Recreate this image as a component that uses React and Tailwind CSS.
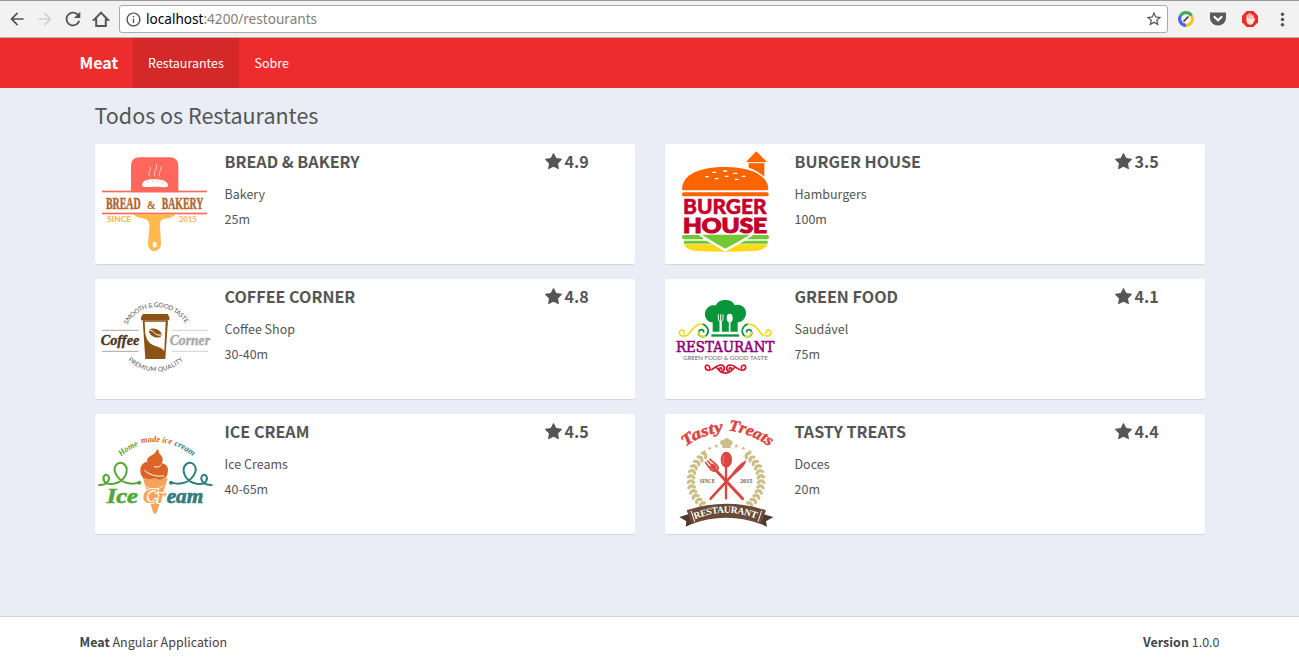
import React from "react";
import { MdArrowBack, MdArrowForward, MdRefresh, MdInfoOutline, MdStarBorder, MdMoreVert } from "react-icons/md";

const SERIF = "'Liberation Serif', serif";
const SANS = "'Lato', 'Liberation Sans', sans-serif";
const LOGO = "block h-[120px] w-[120px] shrink-0";

// k condenses (or widens) the letters; w is the drawn width.
function T({ x, y, w, k = 1, size, fill, font = SANS, weight = 700, style, children, ...rest }) {
  return (
    <text transform={`translate(${x} ${y}) scale(${k} 1)`} textLength={w / k} lengthAdjust="spacingAndGlyphs" fontSize={size} fill={fill} fontFamily={font} fontWeight={weight} fontStyle={style} {...rest}>
      {children}
    </text>
  );
}

function BreadLogo() {
  return (
    <svg viewBox="0 0 360 360" className={LOGO}>
      <path d="M108 145V66Q108 40 134 40H224Q250 40 250 66V145Z" fill="#ff665c" />
      <path d="M141 122C143 107 165 105 180 106C202 106 218 112 219 124C219 132 208 129 180 128C154 129 141 131 141 122Z" fill="#fff" />
      <path d="M155 111l5 7M170 108l5 7M185 108l5 7M200 111l4 7" stroke="#ff9b91" strokeWidth="2" />
      <path d="M165 97C154 87 173 78 164 69M181 97C170 84 192 73 182 60M195 97C186 87 203 78 198 67" fill="none" stroke="#ffc9c3" strokeWidth="3" />
      <rect x="21" y="140" width="315" height="5" fill="#ff665c" />
      <rect x="21" y="206" width="315" height="5" fill="#ff665c" />
      <T x="33" y="194" w="104" k={0.607} size="51" fill="#b1652f" font={SERIF} stroke="#b1652f" strokeWidth="1.5">BREAD</T>
      <T x="156" y="194" w="26" k={0.77} size="40" fill="#b1652f" font={SERIF}>&amp;</T>
      <T x="200" y="194" w="125" k={0.596} size="51" fill="#b1652f" font={SERIF} stroke="#b1652f" strokeWidth="1.5">BAKERY</T>
      <path d="M116 210H241C235 222 220 222 209 224C196 227 194 235 195 249L198 298C198 329 159 329 159 298L163 249C164 235 160 227 148 224C136 221 122 221 116 210Z" fill="#ffb94f" />
      <ellipse cx="179" cy="302" rx="6" ry="9" fill="#fff" />
      <T x="36" y="235" w="72" k={1.15} size="20" fill="#ffb94f" weight="900">SINCE</T>
      <T x="251" y="235" w="54" k={1.15} size="20" fill="#ffb94f" weight="900">2015</T>
    </svg>
  );
}

function BurgerLogo() {
  return (
    <svg viewBox="0 0 360 360" className={LOGO}>
      <path d="M243 54L274 22L306 54H298V99Q277 78 251 71V54Z" fill="#fb6500" />
      <path d="M251 56H298" stroke="#fff" strokeWidth="3" />
      <path d="M51 135C53 89 107 69 181 69C255 69 308 92 310 135Q310 139 304 139H57Q51 139 51 135Z" fill="#fb6500" />
      <g stroke="#fff" strokeWidth="4" strokeLinecap="round">
        <path d="M143 85h9M176 81h9M206 88h9M122 98h8M151 104h8M181 97h8M211 106h8M232 97h8" />
      </g>
      <rect x="51" y="145" width="260" height="12" rx="5" fill="#fb6500" />
      <T x="54" y="210" w="251" size="65" fill="#c60029" weight="900" stroke="#c60029" strokeWidth="1.5">BURGER</T>
      <T x="54" y="268" w="252" size="64" fill="#c60029" weight="900" stroke="#c60029" strokeWidth="3.5">HOUSE</T>
      <rect x="51" y="273" width="261" height="13" rx="6" fill="#72c832" />
      <path d="M57 290H308V299H57Z" fill="#72c832" />
      <path d="M57 301H308Q303 315 277 320Q181 326 86 320Q61 315 57 301Z" fill="#ffd817" />
      <path d="M104 272L181 320L262 272" fill="#72c832" stroke="#fff" strokeWidth="6" />
      <path d="M131 273H235L182 305Z" fill="#72c832" />
      <path d="M116 282L181 318L248 282" fill="none" stroke="#fff" strokeWidth="7" />
    </svg>
  );
}

function CoffeeLogo() {
  return (
    <svg viewBox="0 0 360 360" className={LOGO}>
      <defs>
        <path id="coffee-top" d="M97 137A99 99 0 0 1 272 137" />
        <path id="coffee-bottom" d="M99 243A118 118 0 0 0 268 240" />
      </defs>
      <text fontFamily={SANS} fontSize="19" fill="#555"><textPath href="#coffee-top" textLength="211">SMOOTH &amp; GOOD TASTE</textPath></text>
      <text fontFamily={SANS} fontSize="19" fill="#555"><textPath href="#coffee-bottom" textLength="184">PREMIUM QUALITY</textPath></text>
      <path d="M21 154H131M21 217H131" stroke="#8b7569" strokeWidth="2" />
      <path d="M230 154H340M230 217H340" stroke="#bbb" strokeWidth="2" />
      <T x="17" y="198" w="116" size="46" fill="#513228" font={SERIF} style="italic" stroke="#513228" strokeWidth="1.2">Coffee</T>
      <T x="224" y="198" w="121" size="46" fill="#aaa" font={SERIF} style="italic" stroke="#aaa" strokeWidth="1.2">Corner</T>
      <path d="M144 105H218L223 115V124H138V115Z" fill="#8d5314" />
      <path d="M143 124H219L211 240H151Z" fill="#8d5314" />
      <path d="M149 128H212L208 216C194 199 168 205 156 181L151 166Z" fill="#fff" />
      <ellipse cx="181" cy="162" rx="20" ry="12" transform="rotate(24 181 162)" fill="#8d5314" />
      <path d="M164 154C177 153 178 172 199 168" fill="none" stroke="#fff" strokeWidth="3" />
    </svg>
  );
}

function GreenLogo() {
  return (
    <svg viewBox="0 0 360 360" className={LOGO}>
      <path d="M143 158V130C116 128 111 91 137 80C145 78 150 80 153 79C160 58 202 58 209 79C226 72 244 85 243 103C242 120 230 130 218 130V158Z" fill="#07963a" />
      <path d="M139 166H222V173H139Z" fill="#07963a" />
      <path d="M160 106V119Q160 126 165 127V160M174 106V119Q174 126 169 127V160M167 106V160" fill="none" stroke="#fff" strokeWidth="3" />
      <ellipse cx="194" cy="117" rx="9" ry="13" fill="#fff" />
      <path d="M194 126V160" stroke="#fff" strokeWidth="5" />
      <g fill="none" strokeWidth="5" strokeLinecap="round">
        <path d="M57 164C62 152 43 149 43 161C44 174 65 176 77 158C91 137 109 130 121 140" stroke="#f1db20" />
        <path d="M115 136C130 143 134 160 124 169C113 178 99 171 101 160C103 149 116 150 116 159" stroke="#07963a" />
        <path d="M101 160C102 170 111 175 120 171" stroke="#f1db20" />
        <path d="M304 164C299 152 318 149 318 161C317 174 296 176 284 158C270 137 252 130 240 140" stroke="#f1db20" />
        <path d="M246 136C231 143 227 160 237 169C248 178 262 171 260 160C258 149 245 150 245 159" stroke="#07963a" />
        <path d="M260 160C259 170 250 175 241 171" stroke="#f1db20" />
      </g>
      <T x="33" y="219" w="295" size="42" fill="#900075" font="'DejaVu Serif', serif" weight="400" stroke="#900075" strokeWidth="1.6">RESTAURANT</T>
      <T x="54" y="244" w="254" size="16" fill="#666" weight="400">GREEN FOOD &amp; GOOD TASTE</T>
      <g fill="none" stroke="#d31631" strokeWidth="5" strokeLinecap="round">
        <path d="M134 268C136 257 120 255 121 265C122 276 137 277 149 266C164 253 179 258 178 269C177 280 162 281 163 271C164 263 172 267 170 271M153 264C164 277 170 283 181 282" />
        <path d="M229 268C227 257 243 255 242 265C241 276 226 277 214 266C199 253 184 258 185 269C186 280 201 281 200 271C199 263 191 267 193 271M210 264C199 277 192 283 181 282" />
      </g>
    </svg>
  );
}

function IceLogo() {
  return (
    <svg viewBox="0 0 360 360" className={LOGO}>
      <defs>
        <path id="ice-home" d="M78 128Q102 104 140 91" />
        <path id="ice-made" d="M139 88Q185 78 234 92" />
        <path id="ice-cream" d="M237 94Q268 105 300 132" />
      </defs>
      <g fontFamily={SERIF} fontWeight="700" fontStyle="italic" fontSize="26">
        <text fill="#54a737"><textPath href="#ice-home" textLength="62" lengthAdjust="spacingAndGlyphs">Home</textPath></text>
        <text fill="#db6626"><textPath href="#ice-made" textLength="92" lengthAdjust="spacingAndGlyphs">made ice</textPath></text>
        <text fill="#2f7f7e"><textPath href="#ice-cream" textLength="65" lengthAdjust="spacingAndGlyphs">cream</textPath></text>
      </g>
      <path d="M144 193H218L186 294Q180 304 174 294Z" fill="#f5a45d" />
      <path d="M145 193C128 172 136 145 157 143C153 124 180 128 186 106C195 107 188 117 197 123C207 132 203 145 199 148C216 149 222 164 218 176Q217 190 207 193L194 197L180 193L166 196Z" fill="#dd6427" />
      <path d="M149 170Q173 191 207 186M178 158Q191 163 198 153" fill="none" stroke="#fff" strokeWidth="3" strokeLinecap="round" />
      <path d="M151 217L203 244M157 242L206 215M166 267L194 251" stroke="#ffd2a7" strokeWidth="4" />
      <g fill="none" strokeWidth="6" strokeLinecap="round">
        <path d="M12 213C34 214 47 198 40 186C32 175 20 188 28 202C36 215 75 214 91 185C104 157 82 137 65 151C48 168 69 202 101 208Q116 211 130 206" stroke="#54a737" />
        <path d="M350 213C327 214 314 198 321 186C329 175 341 188 333 202C325 215 286 214 270 185C257 157 279 137 296 151C313 168 292 202 260 208Q245 211 231 206" stroke="#2f7f7e" />
      </g>
      <circle cx="133" cy="206" r="6" fill="#54a737" /><circle cx="228" cy="206" r="6" fill="#2f7f7e" />
      <T x="35" y="267" w="94" k={1.12} size="66" fill="#54a737" font={SERIF} style="italic" stroke="#54a737" strokeWidth="2">Ice</T>
      <T x="143" y="267" w="71" k={0.92} size="66" fill="#f5a45d" font={SERIF} style="italic" stroke="#fff" strokeWidth="6" paintOrder="stroke">Cr</T>
      <T x="215" y="267" w="110" size="62" fill="#2f7f7e" font={SERIF} style="italic" stroke="#2f7f7e" strokeWidth="2">eam</T>
    </svg>
  );
}

function laurel(side) {
  const leaves = [];
  for (let i = 0; i < 12; i++) {
    const a = ((125 + i * 9) * Math.PI) / 180;
    const x = 183 + side * Math.cos(a) * 105;
    const y = 200 - Math.sin(a) * 97;
    const turn = side * (125 + i * 9);
    leaves.push(
      <g key={i} transform={`translate(${x} ${y}) rotate(${-turn})`}>
        <ellipse cx="7" cy="0" rx="9" ry="5" transform="rotate(-40)" />
        <ellipse cx="-7" cy="0" rx="9" ry="5" transform="rotate(40)" />
      </g>
    );
  }
  return leaves;
}

const STAR = "M0 -7L2 -2L7 -2L3 1L5 6L0 3L-5 6L-3 1L-7 -2L-2 -2Z";

function TastyLogo() {
  return (
    <svg viewBox="0 0 360 360" className={LOGO}>
      <defs>
        <path id="tasty-one" d="M62 99Q109 60 184 52" />
        <path id="tasty-two" d="M190 49Q256 56 320 102" />
        <path id="tasty-band" d="M90 316Q182 277 278 316" />
      </defs>
      <g fontFamily={SERIF} fontStyle="italic" fontWeight="700" fontSize="48" fill="#dc4641" stroke="#dc4641" strokeWidth="1.5">
        <text><textPath href="#tasty-one" textLength="124" lengthAdjust="spacingAndGlyphs">Tasty</textPath></text>
        <text><textPath href="#tasty-two" textLength="134" lengthAdjust="spacingAndGlyphs">Treats</textPath></text>
      </g>
      <g fill="#cdbd87">
        {laurel(1)}{laurel(-1)}
        <path d="M172 94C160 90 166 75 176 78C180 70 192 72 194 78C204 76 207 91 197 94V102H172Z" />
        {[[118, 113], [134, 103], [154, 96], [214, 96], [235, 103], [255, 113]].map(([x, y]) => <path key={x} d={STAR} transform={`translate(${x} ${y})`} />)}
      </g>
      <g stroke="#dc4641" fill="none" strokeLinecap="round">
        <path d="M150 166L233 254" strokeWidth="9" />
        <path d="M122 146L137 166Q147 175 157 168Q163 160 153 151L135 136M128 141L146 160" strokeWidth="5" />
        <path d="M135 159L148 168L154 160L146 150Z" fill="#dc4641" strokeWidth="3" />
        <path d="M137 254L214 170" strokeWidth="8" />
        <path d="M183 156V253" strokeWidth="7" />
      </g>
      <path d="M202 178C215 156 232 145 244 138C240 157 224 170 207 183Z" fill="#dc4641" />
      <ellipse cx="184" cy="137" rx="17" ry="24" fill="#dc4641" />
      <path d="M177 150Q171 133 178 124" stroke="#ef9995" strokeWidth="2" fill="none" />
      <T x="104" y="207" w="46" size="16" fill="#756052" font={SERIF}>SINCE</T>
      <T x="225" y="207" w="37" size="16" fill="#756052" font={SERIF}>2015</T>
      <path d="M43 309L79 298L88 326L62 338L64 322ZM325 309L288 298L279 326L306 338L303 322Z" fill="#51382d" />
      <path d="M65 289Q183 250 303 289L287 330Q183 293 80 330Z" fill="#6a4b39" />
      <path d="M78 290L89 323M290 290L279 323" stroke="#fff" strokeWidth="3" />
      <text fontFamily={SERIF} fontWeight="700" fontSize="29" fill="#fff"><textPath href="#tasty-band" textLength="188">RESTAURANT</textPath></text>
    </svg>
  );
}

const RESTAURANTS = [
  ["BREAD & BAKERY", "Bakery", "25m", "4.9", BreadLogo],
  ["BURGER HOUSE", "Hamburgers", "100m", "3.5", BurgerLogo],
  ["COFFEE CORNER", "Coffee Shop", "30-40m", "4.8", CoffeeLogo],
  ["GREEN FOOD", "Saudável", "75m", "4.1", GreenLogo],
  ["ICE CREAM", "Ice Creams", "40-65m", "4.5", IceLogo],
  ["TASTY TREATS", "Doces", "20m", "4.4", TastyLogo],
];

function BrowserBar() {
  return (
    <div className="flex h-[38px] shrink-0 items-center border-t border-b border-t-[#999] border-b-[#b5b3b3] bg-[#f2f2f2] text-[#555]">
      <div className="flex w-[119px] shrink-0 items-center pl-[7px]">
        <MdArrowBack size={20} />
        <MdArrowForward size={20} className="ml-2 text-[#d0d0d0]" />
        <MdRefresh size={22} className="ml-[7px]" />
        <svg className="ml-[8px]" width="18" height="18" viewBox="0 0 18 18"><path d="M2.2 9.7L9 2.6L15.800 9.700H13.800V16H4.200V9.700Z" fill="none" stroke="currentColor" strokeWidth="2" /></svg>
      </div>
      <div className="flex h-7 w-[1049px] items-center rounded-[3px] border border-[#aaa] bg-white pr-[4px] pl-[5px]">
        <MdInfoOutline size={17} />
        <span className="ml-1 text-[13.6px] leading-[20px] text-[#808080] font-['Noto_Sans']"><span className="text-black">localhost</span>:4200/restourants</span>
        <MdStarBorder size={18} className="ml-auto" />
      </div>
      <svg className="ml-[10px]" width="16" height="16" viewBox="0 0 16 16" fill="none">
        <circle cx="8" cy="8" r="6.3" fill="#fff" />
        <path d="M2.5 4.9A6.3 6.3 0 0 1 13.5 4.9" stroke="#45a95b" strokeWidth="3.2" />
        <path d="M13.5 4.9A6.3 6.3 0 0 1 8 14.3" stroke="#fbc22d" strokeWidth="3.2" />
        <path d="M8 14.3A6.3 6.3 0 0 1 2.5 4.9" stroke="#4f63f4" strokeWidth="3.2" />
        <path d="M5.5 10.5L10.5 5.5" stroke="#555" strokeWidth="1.8" />
      </svg>
      <svg className="ml-[16px]" width="16" height="16" viewBox="0 0 16 16"><path d="M0 1.5H16V7A8 7.5 0 0 1 0 7Z" fill="#5a5a5a" /><path d="M4.5 6L8 9.2L11.5 6" fill="none" stroke="#fff" strokeWidth="2.2" strokeLinecap="round" /></svg>
      <svg className="ml-[16px]" width="16" height="16" viewBox="0 0 16 16">
        <path d="M4.7 0H11.3L16 4.7V11.3L11.3 16H4.7L0 11.3V4.7Z" fill="#ed2c24" />
        <path d="M5.300 9V4.600M7.200 8V3M9.100 8V3.200M10.900 9V4.700" stroke="#f6e6e4" strokeWidth="1.500" strokeLinecap="round" />
        <path d="M4.600 7.500H11.600L12.600 7.300Q13.500 7.400 13 8.400L10.900 12.500Q9.800 13.800 7.900 13.800Q4.600 13.300 4.600 10Z" fill="#f6e6e4" />
      </svg>
      <MdMoreVert size={21} className="ml-[14px]" />
    </div>
  );
}

function Card({ item: [name, kind, time, rating, Logo] }) {
  return (
    <article className="flex h-[120px] rounded-[2px] bg-white shadow-[0_1px_1px_rgba(0,0,0,0.1)]">
      <Logo />
      <div className="ml-[9.5px] w-[320px] pt-[7px]">
        <h2 className="text-[16.1px] leading-[20px] font-bold">{name}</h2>
        <p className="mt-[13px] text-[12.5px] leading-[20px]">{kind}</p>
        <p className="mt-[5px] text-[12.5px] leading-[20px]">{time}</p>
      </div>
      <div className="flex items-start pt-[7px] text-[16.1px] leading-[20px] font-bold">
        <svg width="17" height="17" viewBox="0 0 1664 1664" className="mt-[2px] mr-[3px]" fill="currentColor"><path d="M1664 615q0 22-26 48l-363 354 86 500q1 7 1 20 0 21-10.500 35.500t-30.500 14.500q-19 0-40-12l-449-236-449 236q-22 12-40 12-21 0-31.500-14.500t-10.500-35.500q0-6 2-20l86-500-364-354q-25-27-25-48 0-37 56-46l502-73 225-455q19-41 49-41t49 41l225 455 502 73q56 9 56 46z" /></svg>
        {rating}
      </div>
    </article>
  );
}

export default function App() {
  return (
    <div className="flex h-[667px] w-[1299px] flex-col overflow-hidden bg-[#eaedf5] text-[#555] font-['Noto_Sans_CJK_SC',sans-serif]">
      <BrowserBar />
      <nav className="flex h-[50px] shrink-0 items-center bg-[#ed2c2e] pl-[79.5px] text-[12.5px] text-white">
        <span className="w-[53.5px] pb-[2px] text-[16.1px] font-bold">Meat</span>
        <span className="flex h-full w-[106px] items-center justify-center bg-[#d42829]">Restaurantes</span>
        <span className="ml-[15.5px]">Sobre</span>
      </nav>
      <main className="flex-1 px-[95px] pt-[14px]">
        <h1 className="-ml-[0.5px] w-max text-[21.5px] leading-[26px]">Todos os Restaurantes</h1>
        <section className="mt-[16px] grid w-[1110px] grid-cols-2 gap-x-[30px] gap-y-[15px]">
          {RESTAURANTS.map((item) => <Card key={item[0]} item={item} />)}
        </section>
      </main>
      <footer className="flex h-[51px] shrink-0 items-center justify-between border-t border-[#d0d4dd] bg-white pr-[79.5px] pl-[79.5px] text-[12.5px] text-[#444]">
        <span><b>Meat</b> Angular Application</span>
        <span><b>Version</b> 1.0.0</span>
      </footer>
    </div>
  );
}
